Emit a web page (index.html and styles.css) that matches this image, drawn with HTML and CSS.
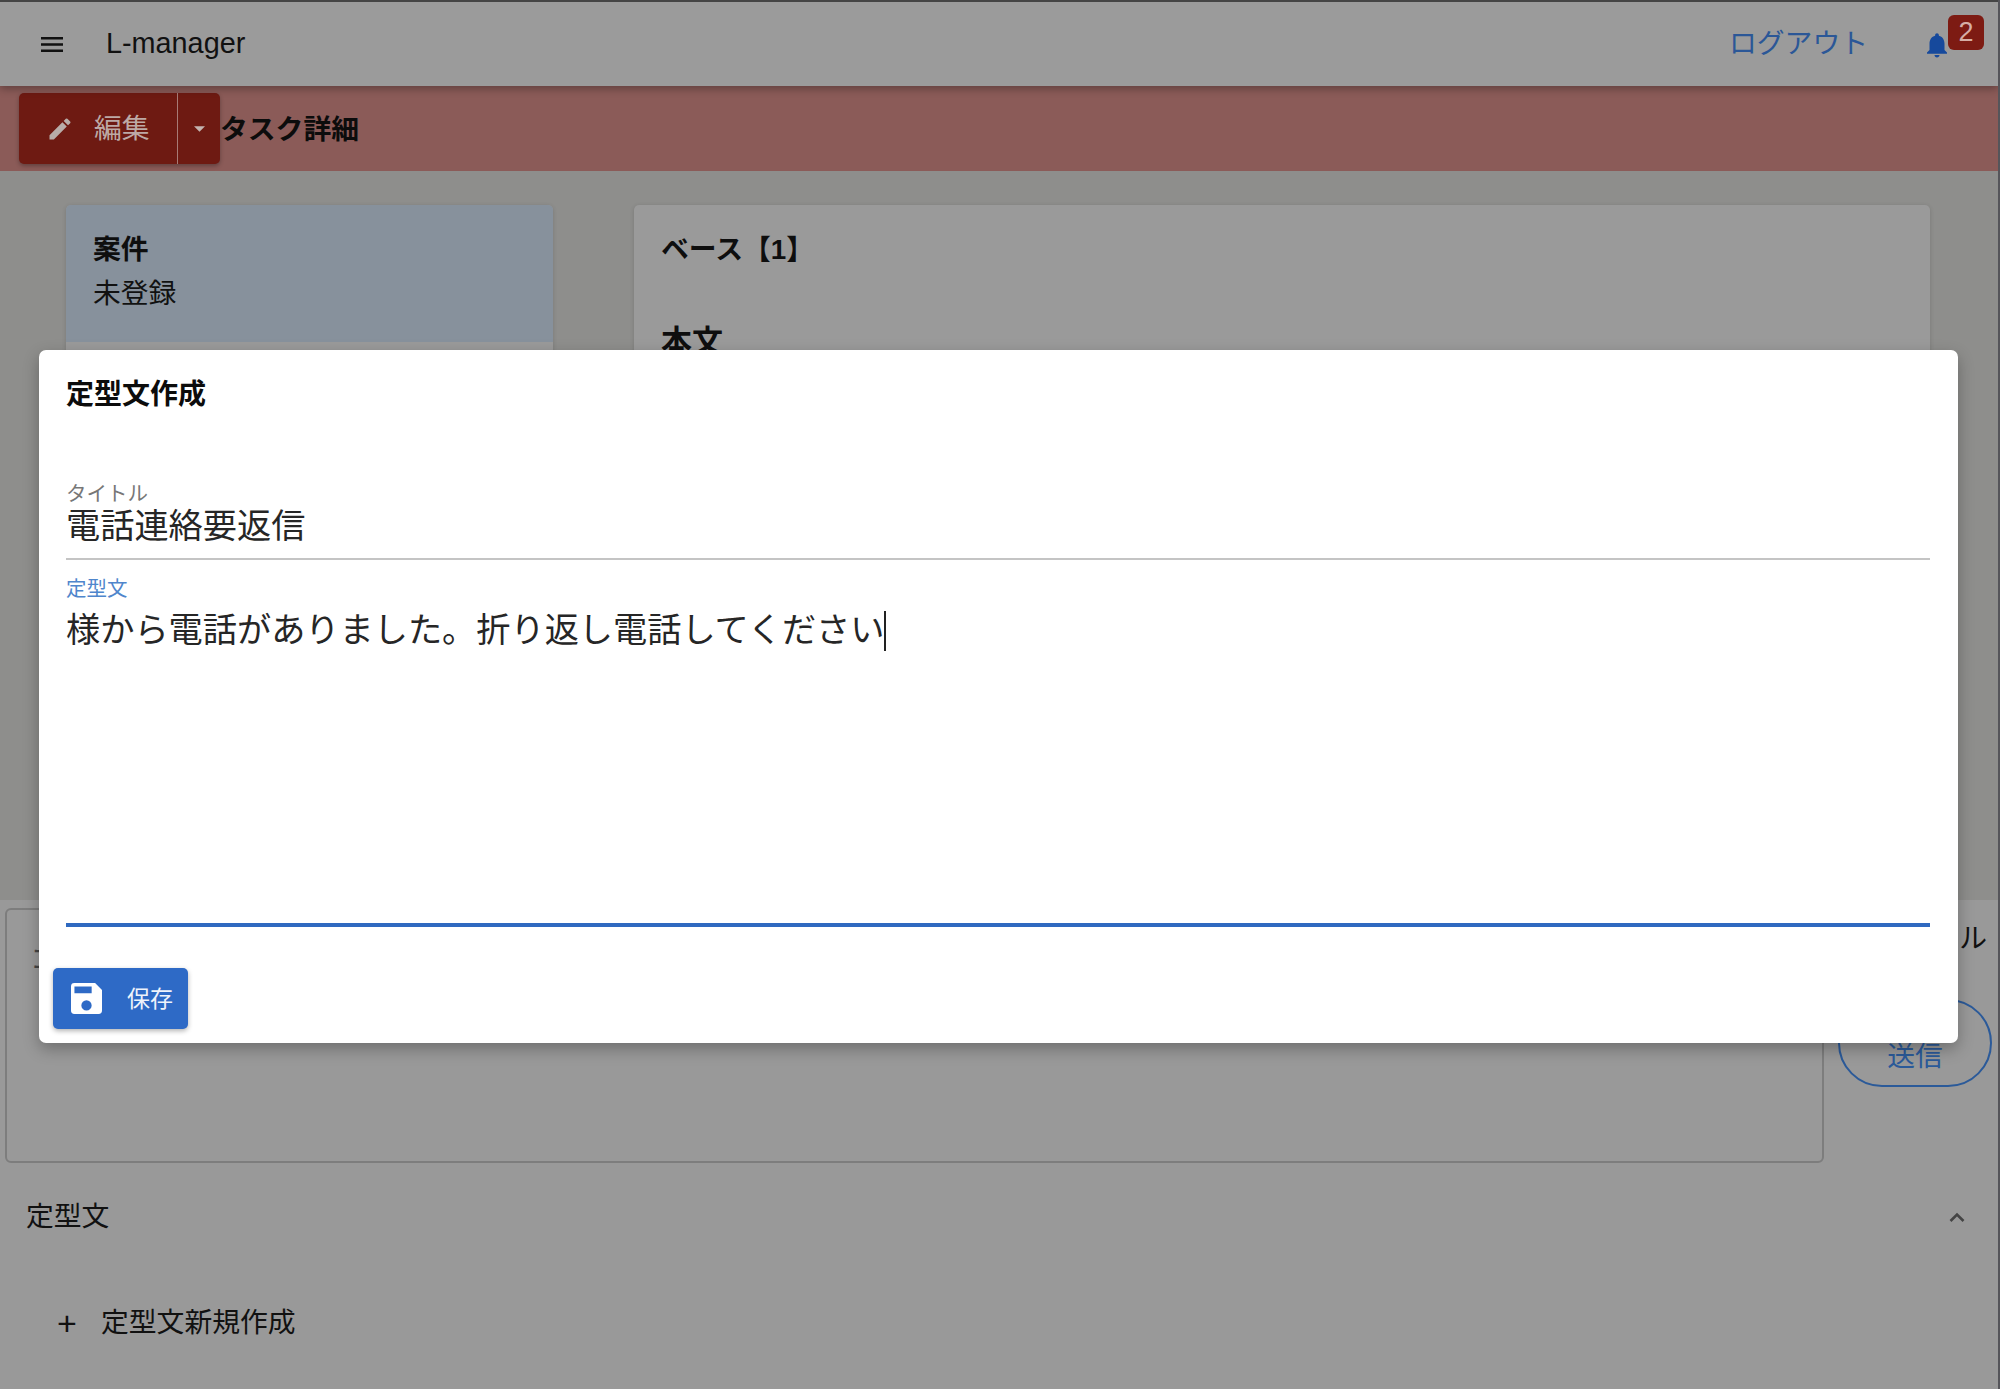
FILE: index.html
```html
<!DOCTYPE html>
<html lang="ja">
<head>
<meta charset="utf-8">
<title>L-manager</title>
<link rel="stylesheet" href="styles.css">
</head>
<body>
<div class="page">
  <header class="appbar">
    <svg class="menu-icon" viewBox="0 0 22 15"><path d="M0 0h22v2.4H0zM0 6.3h22v2.4H0zM0 12.6h22V15H0z"/></svg>
    <div class="brand">L-manager</div>
    <a class="logout">ログアウト</a>
    <div class="bell-wrap">
      <svg class="bell" viewBox="0 0 24 24"><path d="M12 22c1.1 0 2-.9 2-2h-4c0 1.1.9 2 2 2zm6-6v-5c0-3.07-1.63-5.64-4.5-6.32V4c0-.83-.67-1.5-1.5-1.5s-1.5.67-1.5 1.5v.68C7.64 5.36 6 7.92 6 11v5l-2 2v1h16v-1l-2-2z"/></svg>
      <span class="badge">2</span>
    </div>
  </header>
  <div class="titlebar">
    <div class="split-btn">
      <div class="split-main">
        <svg class="pencil" viewBox="0 0 24 24"><path d="M3 17.25V21h3.75L17.81 9.94l-3.75-3.75L3 17.25zM20.71 7.04a1 1 0 0 0 0-1.41l-2.34-2.34a1 1 0 0 0-1.41 0l-1.83 1.83 3.75 3.75 1.83-1.83z"/></svg>
        <span class="split-label">編集</span>
      </div>
      <div class="split-caret"><svg viewBox="0 0 10 5"><path d="M0 0l5 5 5-5z"/></svg></div>
    </div>
    <h1 class="page-title">タスク詳細</h1>
  </div>
  <main class="upper">
    <section class="card card-side">
      <div class="case-head">
        <div class="strong">案件</div>
        <div>未登録</div>
      </div>
    </section>
    <section class="card card-main">
      <div class="strong">ベース【1】</div>
      <div class="strong body-label">本文</div>
    </section>
  </main>
  <section class="composer">
    <div class="comment-box">コメント</div>
    <div class="send-col">
      <div class="mail-label">メール</div>
      <div class="send-btn">送信</div>
    </div>
  </section>
  <section class="templates">
    <div class="accordion-head">
      <span>定型文</span>
      <svg class="chevron" viewBox="0 0 16 10"><path d="M1.5 9 8 2.5 14.5 9" /></svg>
    </div>
    <div class="new-row"><span class="plus">+</span><span>定型文新規作成</span></div>
  </section>
</div>
<div class="dialog">
  <h2 class="dialog-title">定型文作成</h2>
  <div class="field field-title">
    <label class="field-label">タイトル</label>
    <div class="field-value">電話連絡要返信</div>
  </div>
  <div class="field field-body">
    <label class="field-label field-label-focus">定型文</label>
    <div class="field-value">様から電話がありました。折り返し電話してください<span class="caret"></span></div>
  </div>
  <div class="save-btn">
    <svg class="save-icon" viewBox="3 3 18 18"><path d="M17 3H5a2 2 0 0 0-2 2v14a2 2 0 0 0 2 2h14a2 2 0 0 0 2-2V7l-4-4zm-5 16a3 3 0 1 1 0-6 3 3 0 0 1 0 6zm3-10H5V5h10v4z"/></svg>
    <span>保存</span>
  </div>
</div>
</body>
</html>
```
FILE: styles.css
```css
* { box-sizing: border-box; }
html, body { margin: 0; padding: 0; }
body {
  width: 2000px;
  height: 1389px;
  overflow: hidden;
  position: relative;
  background: #999;
  color: #111;
  font-family: "Liberation Sans", "Noto Sans CJK JP", sans-serif;
  font-size: 27.8px;
  line-height: 1.3;
}
.page { height: 1389px; overflow: hidden; border-right: 2px solid #55555a; }

.appbar {
  height: 86px;
  border-top: 2px solid #454545;
  background: #9b9b9b;
  display: flex;
  align-items: center;
  padding-left: 41px;
  position: relative;
  z-index: 2;
  box-shadow: 0 3px 8px rgba(0,0,0,.3);
}
.menu-icon { width: 22px; height: 15px; fill: #111; }
.brand { margin-left: 43px; font-size: 28.8px; }
.logout { margin-left: auto; color: #2b5797; }
.bell-wrap { width: 130px; height: 100%; position: relative; display: flex; align-items: center; }
.bell { width: 30px; height: 30px; fill: #16499c; margin-left: 54px; margin-top: 1px; }
.badge {
  position: absolute; left: 80px; top: 13px;
  width: 36px; height: 35px; border-radius: 6px;
  background: #7d1b13; color: #d6aea6;
  display: flex; align-items: center; justify-content: center;
  font-size: 27px;
}

.titlebar {
  height: 85px;
  background: #8b5b58;
  display: flex;
  align-items: center;
  padding-left: 19px;
}
.split-btn {
  display: flex; height: 71px; width: 201px;
  background: #6e1a12; color: #bda9a5; border-radius: 5px;
  box-shadow: 0 2px 4px rgba(0,0,0,.3);
}
.split-main {
  width: 159px; border-right: 1px solid #a77b76;
  display: flex; align-items: center; padding-left: 27px; gap: 20px;
}
.split-label { margin-top: 2px; }
.pencil { width: 28px; height: 28px; fill: #b8aca8; }
.split-caret { flex: 1; display: flex; align-items: center; justify-content: center; }
.split-caret svg { width: 11px; height: 6px; fill: #c4b4b0; }
.page-title { margin: 3px 0 0; font-size: 27.8px; font-weight: 700; color: #0c0c0c; }

.upper {
  height: 729px;
  background: #8e8e8c;
  display: flex;
  align-items: flex-start;
  padding: 34px 68px 0 66px;
  gap: 81px;
}
.card { border-radius: 5px; height: 300px; box-shadow: 0 1px 4px rgba(0,0,0,.16); background: #9a9a9a; }
.card-side { width: 487px; overflow: hidden; }
.case-head { height: 137px; background: #87919c; padding: 27px 27px; }
.card-main { flex: 1; padding: 27px 27px; }
.strong { font-weight: 700; color: #0e0e0e; }
.case-head .strong { margin-bottom: 8px; }
.body-label { margin-top: 54px; font-size: 31px; }

.composer {
  height: 279px;
  display: flex;
  align-items: flex-start;
  padding: 8px 6px 0 5px;
  gap: 14px;
}
.comment-box {
  width: 1819px; height: 255px;
  border: 2px solid #7d7d7d; border-radius: 6px;
  padding: 32px 23px;
  color: #444;
}
.send-col { width: 154px; position: relative; }
.mail-label { text-align: right; margin-top: 13px; padding-right: 5px; }
.send-btn {
  margin-top: 42px;
  height: 88px;
  border: 2px solid #2b5a99; border-radius: 44px;
  color: #2b5a99;
  display: flex; align-items: center; justify-content: center;
  padding-top: 28px;
}

.templates { padding: 0 27px 0 26px; }
.accordion-head { display: flex; align-items: center; justify-content: space-between; height: 46px; margin-top: 15px; }
.chevron { width: 16px; height: 10px; fill: none; stroke: #444; stroke-width: 2.6; margin-right: 6px; }
.new-row { display: flex; align-items: center; margin-top: 63px; padding-left: 31px; height: 40px; }
.plus { width: 44px; font-size: 34px; font-family: "Liberation Sans", sans-serif; }

.dialog {
  position: absolute;
  left: 39px; top: 350px;
  width: 1919px; height: 693px;
  background: #fff;
  border-radius: 7px;
  box-shadow: 0 6px 16px rgba(0,0,0,.28);
  padding: 0 28px 0 27px;
}
.dialog-title { margin: 0; padding-top: 27px; height: 132px; font-size: 28px; font-weight: 700; color: #0c0c0c; }
.field-title { height: 78px; border-bottom: 2px solid #c4c4c4; }
.field-label { display: block; font-size: 20.5px; line-height: 24px; color: #777; }
.field-value { font-size: 34.2px; line-height: 44px; color: #262626; position: relative; }
.field-title .field-value { margin-top: -2px; }
.field-body { height: 367px; padding-top: 17px; border-bottom: 4px solid #2f69c0; }
.field-label-focus { color: #4f86cc; }
.field-body .field-value { margin-top: 7px; }
.caret { display: inline-block; width: 2px; height: 40px; background: #222; vertical-align: -9px; }

.save-btn {
  margin: 41px 0 0 -13px;
  width: 135px; height: 61px;
  background: #2e6ac6; color: #eef3fb; border-radius: 5px;
  box-shadow: 0 2px 5px rgba(0,0,0,.3);
  display: flex; align-items: center;
  padding-left: 18px;
  gap: 25px;
  font-size: 23px;
}
.save-btn span { margin-top: 2px; }
.save-icon { width: 31px; height: 31px; fill: #fff; }
```
